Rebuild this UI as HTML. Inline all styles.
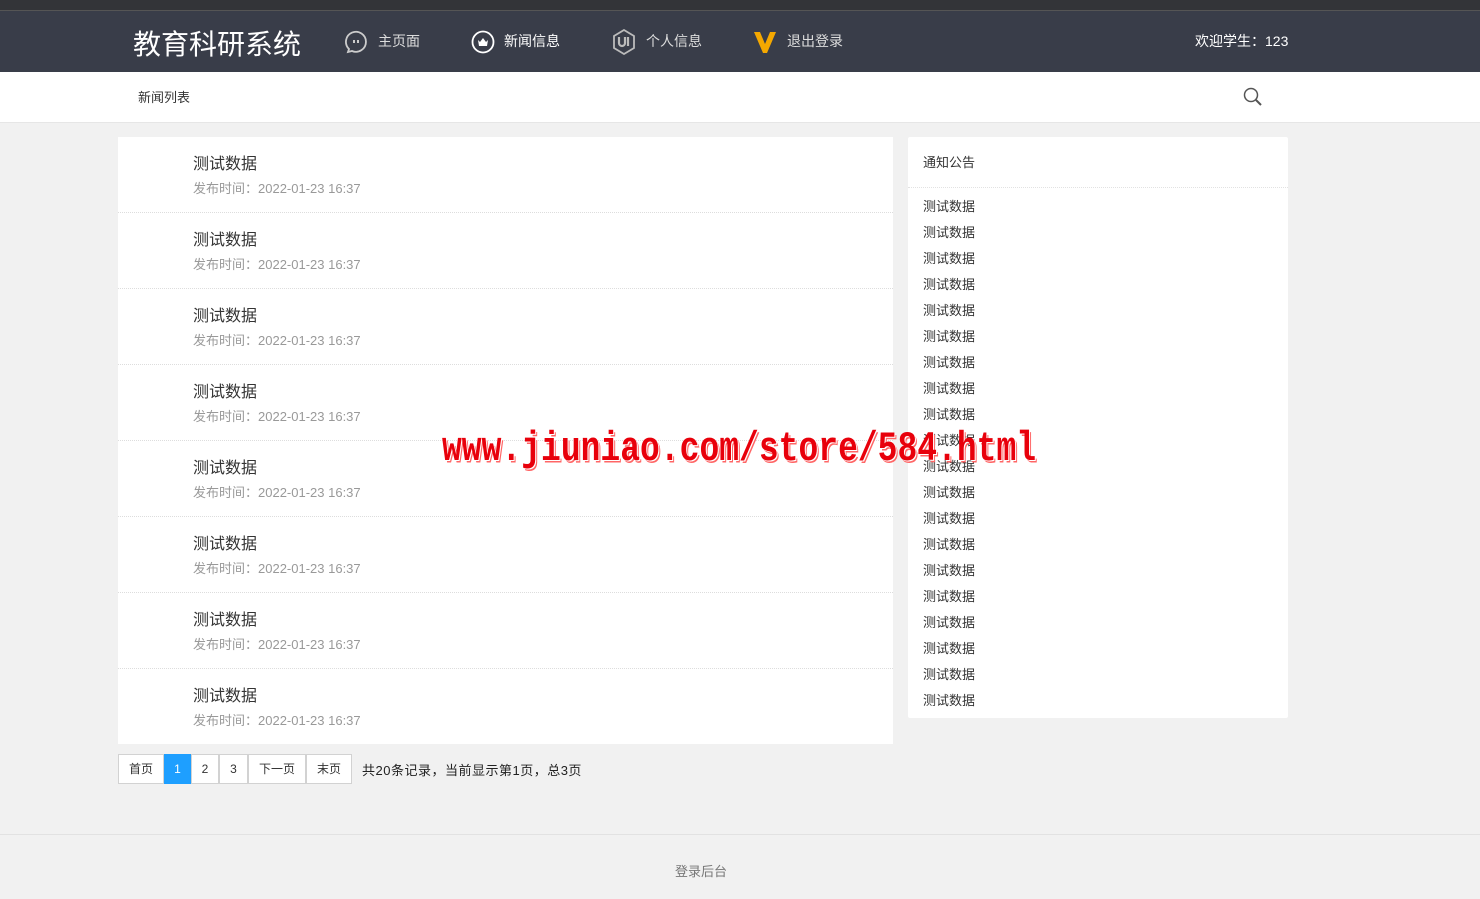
<!DOCTYPE html>
<html><head><meta charset="utf-8"><style>
*{margin:0;padding:0;box-sizing:border-box}
body{width:1480px;height:899px;background:#f1f1f1;font-family:"Liberation Sans","Noto Sans CJK SC",sans-serif;position:relative;overflow:hidden;color:#333}
.a{position:absolute;white-space:nowrap}
.top{position:absolute;left:0;top:0;width:1480px;height:10px;background:#333438}
.nav{position:absolute;left:0;top:10px;width:1480px;height:62px;background:#393d49;border-top:1px solid #555}
.sub{position:absolute;left:0;top:72px;width:1480px;height:51px;background:#fff;border-bottom:1px solid #e6e6e6}
.nt{font-size:14px;color:#ddd}
.left{position:absolute;left:118px;top:137px;width:775px;height:607px;background:#fff}
.row{height:76px;border-bottom:1px dotted #ddd;position:relative}
.row .t{position:absolute;left:75px;top:13px;font-size:16px;color:#333}
.row .d{position:absolute;left:75px;top:41px;font-size:13px;color:#999}
.right{position:absolute;left:908px;top:137px;width:380px;height:581px;background:#fff;border-radius:2px}
.pg{position:absolute;top:754px;height:30px;border:1px solid #d2d2d2;background:#fff;font-size:12px;color:#333;text-align:center;line-height:28px}
</style></head><body>
<div class="top"></div>
<div class="nav">
<div class="a" style="left:133px;top:12px;font-size:28px;color:#fff">教育科研系统</div>
<svg class="a" style="left:344px;top:19px" width="24" height="24" viewBox="0 0 24 24"><path d="M5 19A10 10 0 1 1 8 21L4 22Z" fill="none" stroke="#ccc" stroke-width="1.8"/><path d="M10 10v3M14 10v3" stroke="#ccc" stroke-width="2"/></svg>
<div class="a nt" style="left:378px;top:20px">主页面</div>
<svg class="a" style="left:471px;top:19px" width="24" height="24" viewBox="0 0 24 24"><circle cx="12" cy="12" r="10.5" fill="none" stroke="#fff" stroke-width="1.8"/><path d="M7 10l2 2 3-4 3 4 2-2-1 6H8z" fill="#fff"/></svg>
<div class="a nt" style="left:504px;top:20px;color:#fff">新闻信息</div>
<svg class="a" style="left:612px;top:18px" width="24" height="26" viewBox="0 0 24 26"><path d="M12 1l10 6v12l-10 6-10-6V7z" fill="none" stroke="#bbb" stroke-width="1.8"/><path d="M7 8v6a3 3 0 0 0 6 0V8M16 8v9" stroke="#bbb" stroke-width="2.2" fill="none"/></svg>
<div class="a nt" style="left:646px;top:20px">个人信息</div>
<svg class="a" style="left:752px;top:18px" width="26" height="26" viewBox="0 0 26 26"><path d="M2 3h6l5 12 5-12h6L15 24h-4z" fill="#f5a800"/></svg>
<div class="a nt" style="left:787px;top:20px">退出登录</div>
<div class="a" style="left:1195px;top:20px;font-size:14px;color:#fff">欢迎学生：123</div>
</div>
<div class="sub">
<div class="a" style="left:138px;top:15px;font-size:13px;color:#333">新闻列表</div>
<svg class="a" style="left:1243px;top:15px" width="20" height="20" viewBox="0 0 20 20"><circle cx="8" cy="8" r="6.5" fill="none" stroke="#555" stroke-width="1.5"/><path d="M13 13l5 5" stroke="#555" stroke-width="2"/></svg>
</div>
<div class="left">
<div class="row"><div class="t">测试数据</div><div class="d">发布时间：2022-01-23 16:37</div></div>
<div class="row"><div class="t">测试数据</div><div class="d">发布时间：2022-01-23 16:37</div></div>
<div class="row"><div class="t">测试数据</div><div class="d">发布时间：2022-01-23 16:37</div></div>
<div class="row"><div class="t">测试数据</div><div class="d">发布时间：2022-01-23 16:37</div></div>
<div class="row"><div class="t">测试数据</div><div class="d">发布时间：2022-01-23 16:37</div></div>
<div class="row"><div class="t">测试数据</div><div class="d">发布时间：2022-01-23 16:37</div></div>
<div class="row"><div class="t">测试数据</div><div class="d">发布时间：2022-01-23 16:37</div></div>
<div class="row" style="border:none"><div class="t">测试数据</div><div class="d">发布时间：2022-01-23 16:37</div></div>
</div>
<div class="right">
<div class="a" style="left:15px;top:15px;font-size:13px">通知公告</div>
<div style="position:absolute;left:0;top:50px;width:380px;border-top:1px dotted #e2e2e2"></div>
<div style="position:absolute;left:15px;top:57px;font-size:13px;line-height:26px">测试数据<br>测试数据<br>测试数据<br>测试数据<br>测试数据<br>测试数据<br>测试数据<br>测试数据<br>测试数据<br>测试数据<br>测试数据<br>测试数据<br>测试数据<br>测试数据<br>测试数据<br>测试数据<br>测试数据<br>测试数据<br>测试数据<br>测试数据</div>
</div>
<div class="pg" style="left:118px;width:46px">首页</div>
<div class="pg" style="left:164px;width:27px;background:#1e9fff;border-color:#1e9fff;color:#fff">1</div>
<div class="pg" style="left:191px;width:28px">2</div>
<div class="pg" style="left:219px;width:29px">3</div>
<div class="pg" style="left:248px;width:58px">下一页</div>
<div class="pg" style="left:306px;width:46px">末页</div>
<div class="a" style="left:362px;top:760px;font-size:13px;color:#222;letter-spacing:0.5px">共20条记录，当前显示第1页，总3页</div>
<div style="position:absolute;left:0;top:834px;width:1480px;border-top:1px solid #e2e2e2"></div>
<div class="a" style="left:675px;top:861px;font-size:13px;color:#777">登录后台</div>
<div class="a" style="left:442px;top:426px;font-family:'Liberation Mono',monospace;font-weight:bold;font-size:33px;color:#e8000b;transform:scaleY(1.25);transform-origin:0 0;text-shadow:1px 1px 0 #fff,2px 2px 0 #f66">www.jiuniao.com/store/584.html</div>
</body></html>
